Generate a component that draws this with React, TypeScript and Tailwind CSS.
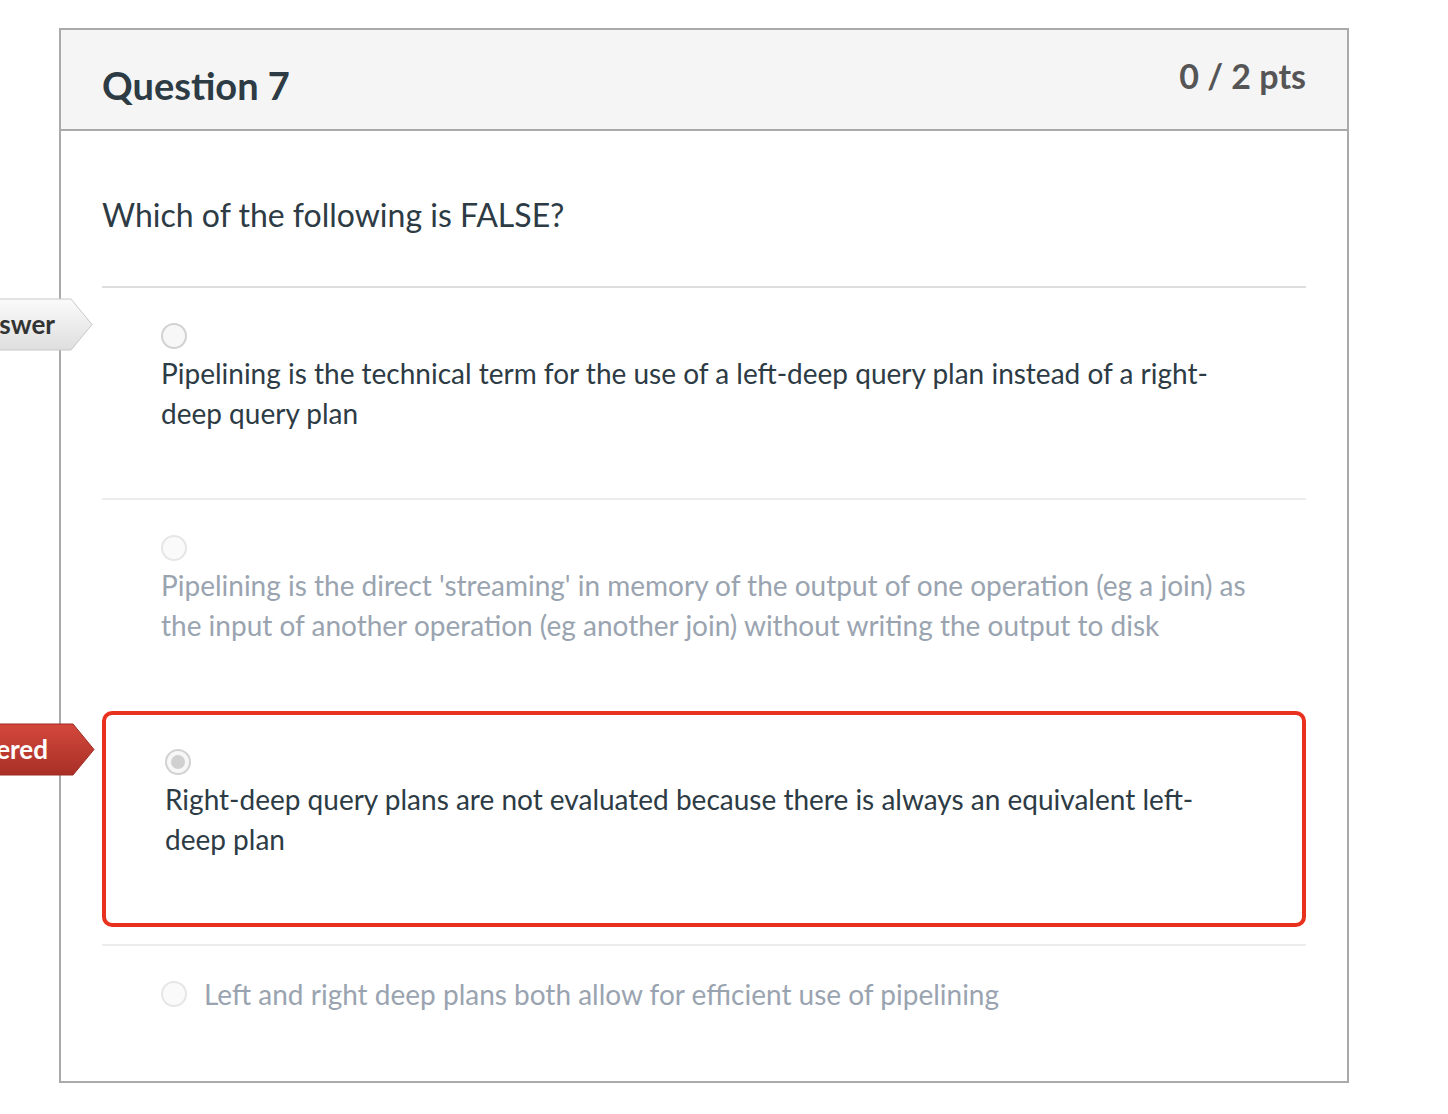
import React from 'react';

function Radio({ checked = false, faded = false }: { checked?: boolean; faded?: boolean }) {
  return (
    <span
      className={`flex h-[26px] w-[26px] shrink-0 items-center justify-center rounded-full border-2 ${
        faded ? 'border-[#e6e6e6] bg-[#fafafa]' : 'border-[#d2d2d2] bg-[#f7f7f7]'
      }`}
    >
      {checked && <span className="h-[14px] w-[14px] rounded-full bg-[#d0d0d0]" />}
    </span>
  );
}

function Flag({ text, tone }: { text: string; tone: 'gray' | 'red' }) {
  const red = tone === 'red';
  return (
    <div
      className={`absolute h-[53px] w-[260px] ${
        red ? 'right-[calc(100%+11px)] top-[8px]' : 'right-[calc(100%+9px)] top-[10px]'
      }`}
    >
      <svg width="260" height="53" viewBox="0 0 260 53" className="absolute inset-0">
        <defs>
          <linearGradient id={`g-${tone}`} x1="0" y1="0" x2="0" y2="1">
            <stop offset="0" stopColor={red ? '#d4483c' : '#fbfbfb'} />
            <stop offset="1" stopColor={red ? '#a82f26' : '#dedede'} />
          </linearGradient>
        </defs>
        <polygon
          points="0,1 238,1 259,26.5 238,52 0,52"
          fill={`url(#g-${tone})`}
          stroke={red ? '#9e2b22' : '#c8c8c8'}
          strokeWidth="1"
        />
      </svg>
      <span
        className={`absolute top-0 text-[26px] font-bold leading-[53px] ${
          red ? 'right-[47px] text-white' : 'right-[38px] text-[#333]'
        }`}
      >
        {text}
      </span>
    </div>
  );
}

export default function App() {
  return (
    <div
      className="min-h-[1114px] overflow-hidden bg-white pl-[59px] pt-[28px]"
      style={{ fontFamily: 'Lato, "Noto Sans", sans-serif' }}
    >
      <div className="w-[1290px] border-2 border-[#aaaaaa]">
        {/* header */}
        <div className="flex h-[101px] justify-between border-b-2 border-[#aaaaaa] bg-[#f5f5f5] px-[41px]">
          <h2 className="pt-[32px] text-[38px] font-bold leading-[46px] text-[#2d3b45]">Question 7</h2>
          <div className="pt-[25px] text-[34px] font-bold leading-[41px] text-[#555555]">0 / 2 pts</div>
        </div>

        <div className="px-[41px]">
          <p className="pb-[51px] pt-[64px] text-[32px] leading-[40px] text-[#2d3b45]">
            Which of the following is FALSE?
          </p>

          {/* answer 1 */}
          <div className="relative border-t-2 border-[#dddddd] pb-[65px] pl-[59px] pt-[35px]">
            <Flag text="Correct Answer" tone="gray" />
            <Radio />
            <div className="mt-[4px] pr-[60px] text-[28px] leading-[40px] text-[#2d3b45]">
              Pipelining is the technical term for the use of a left-deep query plan instead of a right-deep query plan
            </div>
          </div>

          {/* answer 2 */}
          <div className="border-t-2 border-[#ececec] pb-[66px] pl-[59px] pr-[40px] pt-[35px]">
            <Radio faded />
            <div className="mt-[4px] text-[28px] leading-[40px] text-[#9aa4b0]">
              Pipelining is the direct 'streaming' in memory of the output of one operation (eg a join) as the input of another operation (eg another join) without writing the output to disk
            </div>
          </div>

          {/* answer 3 - chosen */}
          <div className="relative rounded-[10px] border-4 border-[#e8321f] pb-[64px] pl-[59px] pt-[34px]">
            <Flag text="You Answered" tone="red" />
            <Radio checked />
            <div className="mt-[4px] pr-[80px] text-[28px] leading-[40px] text-[#2d3b45]">
              Right-deep query plans are not evaluated because there is always an equivalent left-deep plan
            </div>
          </div>

          {/* answer 4 */}
          <div className="mt-[17px] flex items-center gap-[17px] border-t-2 border-[#ececec] pb-[74px] pl-[59px] pt-[35px]">
            <Radio faded />
            <span className="text-[28px] leading-[26px] text-[#9aa4b0]">
              Left and right deep plans both allow for efficient use of pipelining
            </span>
          </div>
        </div>
      </div>
    </div>
  );
}
